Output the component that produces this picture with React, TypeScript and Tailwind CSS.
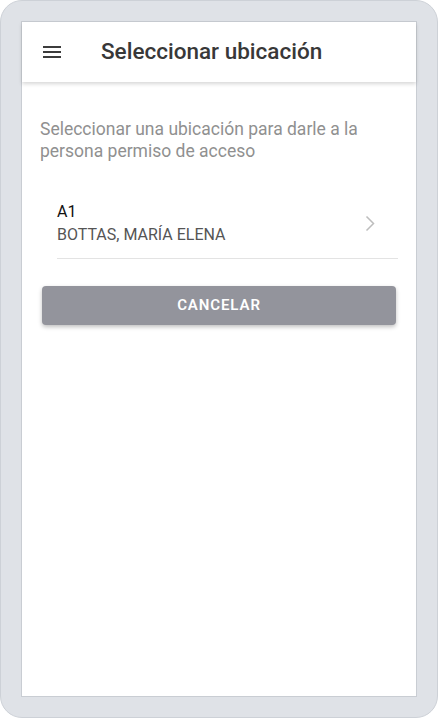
const MenuIcon = () => (
  <svg className="w-6 h-6 fill-current text-[#3c3c3c]" viewBox="0 0 24 24">
    <path d="M3 18h18v-2H3v2zm0-5h18v-2H3v2zm0-7v2h18V6H3z" />
  </svg>
);

const Chevron = () => (
  <svg className="w-[10px] h-[17px]" viewBox="0 0 10 17" fill="none">
    <path d="M1.5 1.5l7 7-7 7" stroke="#bdbdbd" strokeWidth="1.5" />
  </svg>
);

export default function App() {
  return (
    <div className="w-[438px] h-[718px] bg-white font-['Roboto',sans-serif]">
      <div className="w-full h-full rounded-[22px] bg-[#dfe2e7] border border-[#cdd1d7] p-5">
        <div className="h-full border border-[#c9cdd3] bg-white flex flex-col">
          <header className="h-[60px] flex items-center pl-[18px] shadow-[0_2px_4px_rgba(0,0,0,0.16)] relative">
            <MenuIcon />
            <h1 className="ml-[37px] text-[22.5px] font-medium text-[#383838]">Seleccionar ubicación</h1>
          </header>

          <div className="px-[18px]">
            <p className="mt-[36px] text-[17.5px] leading-[22px] text-[#909090]">
              Seleccionar una ubicación para darle a la persona permiso de acceso
            </p>

            <div className="mt-[26px] ml-[17px] border-b border-[#e3e3e3] pt-[12px] pb-[12px] flex items-center justify-between">
              <div className="text-[16px] leading-[23px]">
                <div className="text-[#111]">A1</div>
                <div className="text-[#555]">BOTTAS, MARÍA ELENA</div>
              </div>
              <div className="mr-[23px]">
                <Chevron />
              </div>
            </div>

            <button className="mt-[27px] w-[354px] ml-[2px] h-[39px] rounded-[4px] bg-[#93949c] text-white text-[15px] font-semibold tracking-[0.06em] shadow-[0_2px_4px_rgba(0,0,0,0.25)]">
              CANCELAR
            </button>
          </div>
        </div>
      </div>
    </div>
  );
}
